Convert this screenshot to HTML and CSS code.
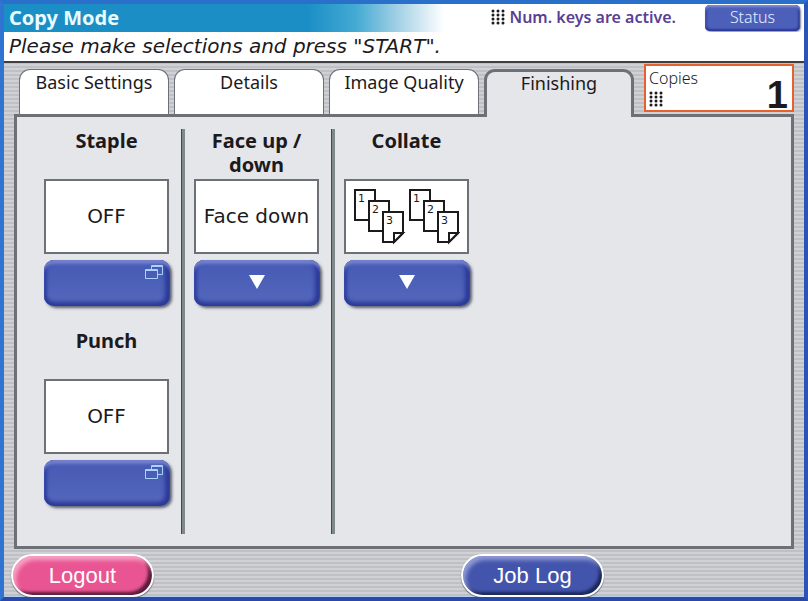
FILE: index.html
```html
<!DOCTYPE html>
<html lang="en">
<head>
    <meta charset="UTF-8">
    <meta name="viewport" content="width=device-width, initial-scale=1.0">
    <title>Copy Mode</title>
    <link rel="stylesheet" href="styles.css">
</head>
<body>
    <header class="titlebar">
        <h1>Copy Mode</h1>
        <p class="keys-note">
            <svg class="keypad" width="14" height="16" viewBox="0 0 14 16" aria-hidden="true">
                <path d="M2 2h.01M7 2h.01M12 2h.01M2 6h.01M7 6h.01M12 6h.01M2 10h.01M7 10h.01M12 10h.01M2 14h.01M7 14h.01M12 14h.01"/>
            </svg>
            Num. keys are active.
        </p>
        <button type="button" class="status">Status</button>
    </header>
    <p class="message">Please make selections and press "START".</p>

    <main>
        <div class="tabbar">
            <div class="tabs" role="tablist">
                <button type="button" role="tab" class="tab">Basic Settings</button>
                <button type="button" role="tab" class="tab">Details</button>
                <button type="button" role="tab" class="tab">Image Quality</button>
                <button type="button" role="tab" class="tab active" aria-selected="true">Finishing</button>
            </div>
            <div class="copies">
                <label for="copies">
                    Copies
                    <svg class="keypad" width="14" height="16" viewBox="0 0 14 16" aria-hidden="true">
                        <path d="M2 2h.01M7 2h.01M12 2h.01M2 6h.01M7 6h.01M12 6h.01M2 10h.01M7 10h.01M12 10h.01M2 14h.01M7 14h.01M12 14h.01"/>
                    </svg>
                </label>
                <input type="text" id="copies" value="1" inputmode="numeric">
            </div>
        </div>

        <div class="panel" role="tabpanel">
            <div class="column">
                <section class="setting">
                    <h2>Staple</h2>
                    <div class="value">OFF</div>
                    <button type="button" class="key" aria-label="Staple">
                        <svg class="popup" width="18" height="15" viewBox="0 0 18 15" aria-hidden="true">
                            <path d="M6.5 4V.5h11v9H13M6 1.5h11M.5 4.500h12v9H.5zM1 5.500h11"/>
                        </svg>
                    </button>
                </section>
                <section class="setting">
                    <h2>Punch</h2>
                    <div class="value">OFF</div>
                    <button type="button" class="key" aria-label="Punch">
                        <svg class="popup" width="18" height="15" viewBox="0 0 18 15" aria-hidden="true">
                            <path d="M6.5 4V.5h11v9H13M6 1.5h11M.5 4.500h12v9H.5zM1 5.500h11"/>
                        </svg>
                    </button>
                </section>
            </div>
            <div class="column">
                <section class="setting">
                    <h2>Face up / down</h2>
                    <div class="value">Face down</div>
                    <button type="button" class="key" aria-label="Face up / down">
                        <svg class="arrow" width="16" height="14" viewBox="0 0 16 14" aria-hidden="true"><path d="M0 0h16L8 14z"/></svg>
                    </button>
                </section>
            </div>
            <div class="column">
                <section class="setting">
                    <h2>Collate</h2>
                    <div class="value">
                        <svg class="sheets" width="106" height="56" viewBox="0 0 106 56" role="img" aria-label="Collated sets">
                            <defs>
                                <g id="set">
                                    <path d="M1 1h20v30H1z"/>
                                    <path d="M15 12h20v30H15z"/>
                                    <path d="M29 23h20v21l-9 9H29z"/>
                                    <path d="M40 53v-9h9z"/>
                                    <text x="4" y="13">1</text>
                                    <text x="18" y="24">2</text>
                                    <text x="32" y="35">3</text>
                                </g>
                            </defs>
                            <use href="#set"/>
                            <use href="#set" x="55"/>
                        </svg>
                    </div>
                    <button type="button" class="key" aria-label="Collate">
                        <svg class="arrow" width="16" height="14" viewBox="0 0 16 14" aria-hidden="true"><path d="M0 0h16L8 14z"/></svg>
                    </button>
                </section>
            </div>
        </div>
    </main>

    <footer class="actions">
        <button type="button" class="pill logout">Logout</button>
        <button type="button" class="pill joblog">Job Log</button>
    </footer>
</body>
</html>
```
FILE: styles.css
```css
* {
    box-sizing: border-box;
}
body {
    display: flex;
    flex-direction: column;
    min-height: 100vh;
    margin: 0;
    border: 4px solid;
    border-color: #2a6fc9 #2a55b5 #2a48a8 #2f74d0;
    background: repeating-linear-gradient(#d0d1d5 0 2px, #bfc0c6 2px 4px);
    box-shadow: inset 0 -1px #b4cff0;
    color: #1c1a1c;
    font-family: "Noto Sans", sans-serif;
    font-size: 18px;
}
h1, h2, p {
    margin: 0;
}
button {
    padding: 0;
    border: none;
    font: inherit;
    cursor: pointer;
}

/* title and message */
.titlebar {
    display: flex;
    align-items: center;
    height: 28px;
    padding: 0 4px 0 5px;
    background: linear-gradient(to right, #1b8fc5 38%, #44aad4 44%, #9fcfe4 49%, #fff 55%);
}
h1 {
    flex: 1;
    color: #e9fbff;
    font-size: 20px;
    line-height: 28px;
}
.keys-note {
    display: flex;
    align-items: center;
    gap: 4px;
    margin-right: 29px;
    padding-bottom: 2px;
    color: #5a3f95;
    font-size: 16px;
    font-weight: 600;
}
.keypad {
    fill: none;
    stroke: #1c1a1c;
    stroke-width: 3;
    stroke-linecap: round;
}
.status {
    width: 95px;
    height: 26px;
    padding-bottom: 2px;
    border-radius: 5px;
    background: #4c60ba;
    box-shadow: inset 0 2px 2px #7f8cd8, inset 0 -2px 2px #2c3a98, inset 2px 0 2px #3346a6, inset -2px 0 2px #2c3a98, 1px 1px 2px #8084a0;
    color: #e9efff;
    font-size: 16px;
    font-weight: 300;
}
.message {
    height: 31px;
    padding-left: 5px;
    border-bottom: 2px solid #3c3e42;
    background: #fff;
    font-family: "DejaVu Sans", sans-serif;
    font-size: 20px;
    font-style: italic;
    line-height: 29px;
}

/* tabs */
main {
    display: flex;
    flex: 1;
    flex-direction: column;
    padding: 1px 10px 0;
}
.tabbar {
    display: flex;
    justify-content: space-between;
    padding-left: 5px;
}
.tabs {
    display: flex;
    gap: 5px;
    padding-top: 5px;
}
.tab {
    width: 150px;
    height: 45px;
    padding-bottom: 20px;
    border: 1px solid #6d7076;
    border-bottom: none;
    border-radius: 11px 11px 0 0;
    background: #fff;
    color: #1c1a1c;
    line-height: 20px;
}
.tab.active {
    position: relative;
    height: 48px;
    margin-bottom: -3px;
    padding-bottom: 24px;
    border: 3px solid #6d7076;
    border-bottom: none;
    background: #e5e6ea;
}
.copies {
    display: flex;
    justify-content: space-between;
    width: 150px;
    height: 48px;
    border: 2px solid #e5622f;
    background: #fff;
}
.copies label {
    display: flex;
    flex-direction: column;
    gap: 2px;
    padding: 1px 0 0 3px;
    font-size: 16px;
    font-weight: 300;
    line-height: 22px;
}
.copies input {
    width: 60px;
    padding: 14px 4px 0 0;
    border: none;
    background: none;
    color: #1c1a1c;
    font-family: "Liberation Sans", sans-serif;
    font-size: 38px;
    font-weight: bold;
    line-height: 32px;
    text-align: right;
}

/* finishing panel */
.panel {
    display: flex;
    flex: 1;
    padding: 12px 18px;
    border: 3px solid #6d7076;
    background: #e5e6ea;
}
.column {
    width: 150px;
    padding-left: 9px;
    border-right: 3px solid #7f898b;
    box-shadow: inset -1px 0 #44484c;
}
.column:last-child {
    border-right: none;
    box-shadow: none;
}
.setting {
    width: 125px;
    margin-bottom: 23px;
}
.setting h2 {
    height: 50px;
    font-size: 20px;
    line-height: 24px;
    text-align: center;
}
.value {
    display: flex;
    align-items: center;
    justify-content: center;
    height: 75px;
    padding-bottom: 2px;
    border: 2px solid #6d7076;
    background: #fff;
    font-family: "DejaVu Sans", sans-serif;
    font-size: 20px;
}
.key {
    display: flex;
    align-items: center;
    justify-content: center;
    width: 126px;
    height: 46px;
    margin-top: 6px;
    border-radius: 10px;
    background: linear-gradient(#4659b4, #5468bc);
    box-shadow: inset 0 5px 3px -1px #7380cc, inset 0 -4px 4px #2c3a98, inset 4px 0 3px -1px #3044a6, inset -5px 0 4px #2c3a98, 2px 2px 3px #5c6070;
}
.popup {
    align-self: flex-start;
    margin: 5px 7px 0 auto;
    fill: none;
    stroke: #a9d3fa;
}
.arrow {
    margin-bottom: 2px;
    fill: #fff;
}
.sheets {
    margin-top: 2px;
    fill: #fff;
    stroke: #1c1a1c;
    stroke-width: 2;
}
.sheets text {
    fill: #1c1a1c;
    stroke: none;
    font-size: 11px;
}

/* bottom buttons */
.actions {
    display: flex;
    gap: 307px;
    padding: 5px 7px 0;
}
.pill {
    width: 143px;
    height: 43px;
    border: 2px solid #fff;
    border-radius: 22px;
    color: #fff;
    font-family: "Liberation Sans", sans-serif;
    font-size: 22px;
}
.logout {
    background: #e95592;
    box-shadow: inset 3px 4px 4px #f6a3c4, inset -4px -3px 3px #5c1c3c, 0 1px 1px #50525a;
}
.joblog {
    background: #4354ac;
    box-shadow: inset 3px 4px 4px #8f9ad4, inset -3px -3px 3px #1c2858, 0 1px 1px #50525a;
}
```
